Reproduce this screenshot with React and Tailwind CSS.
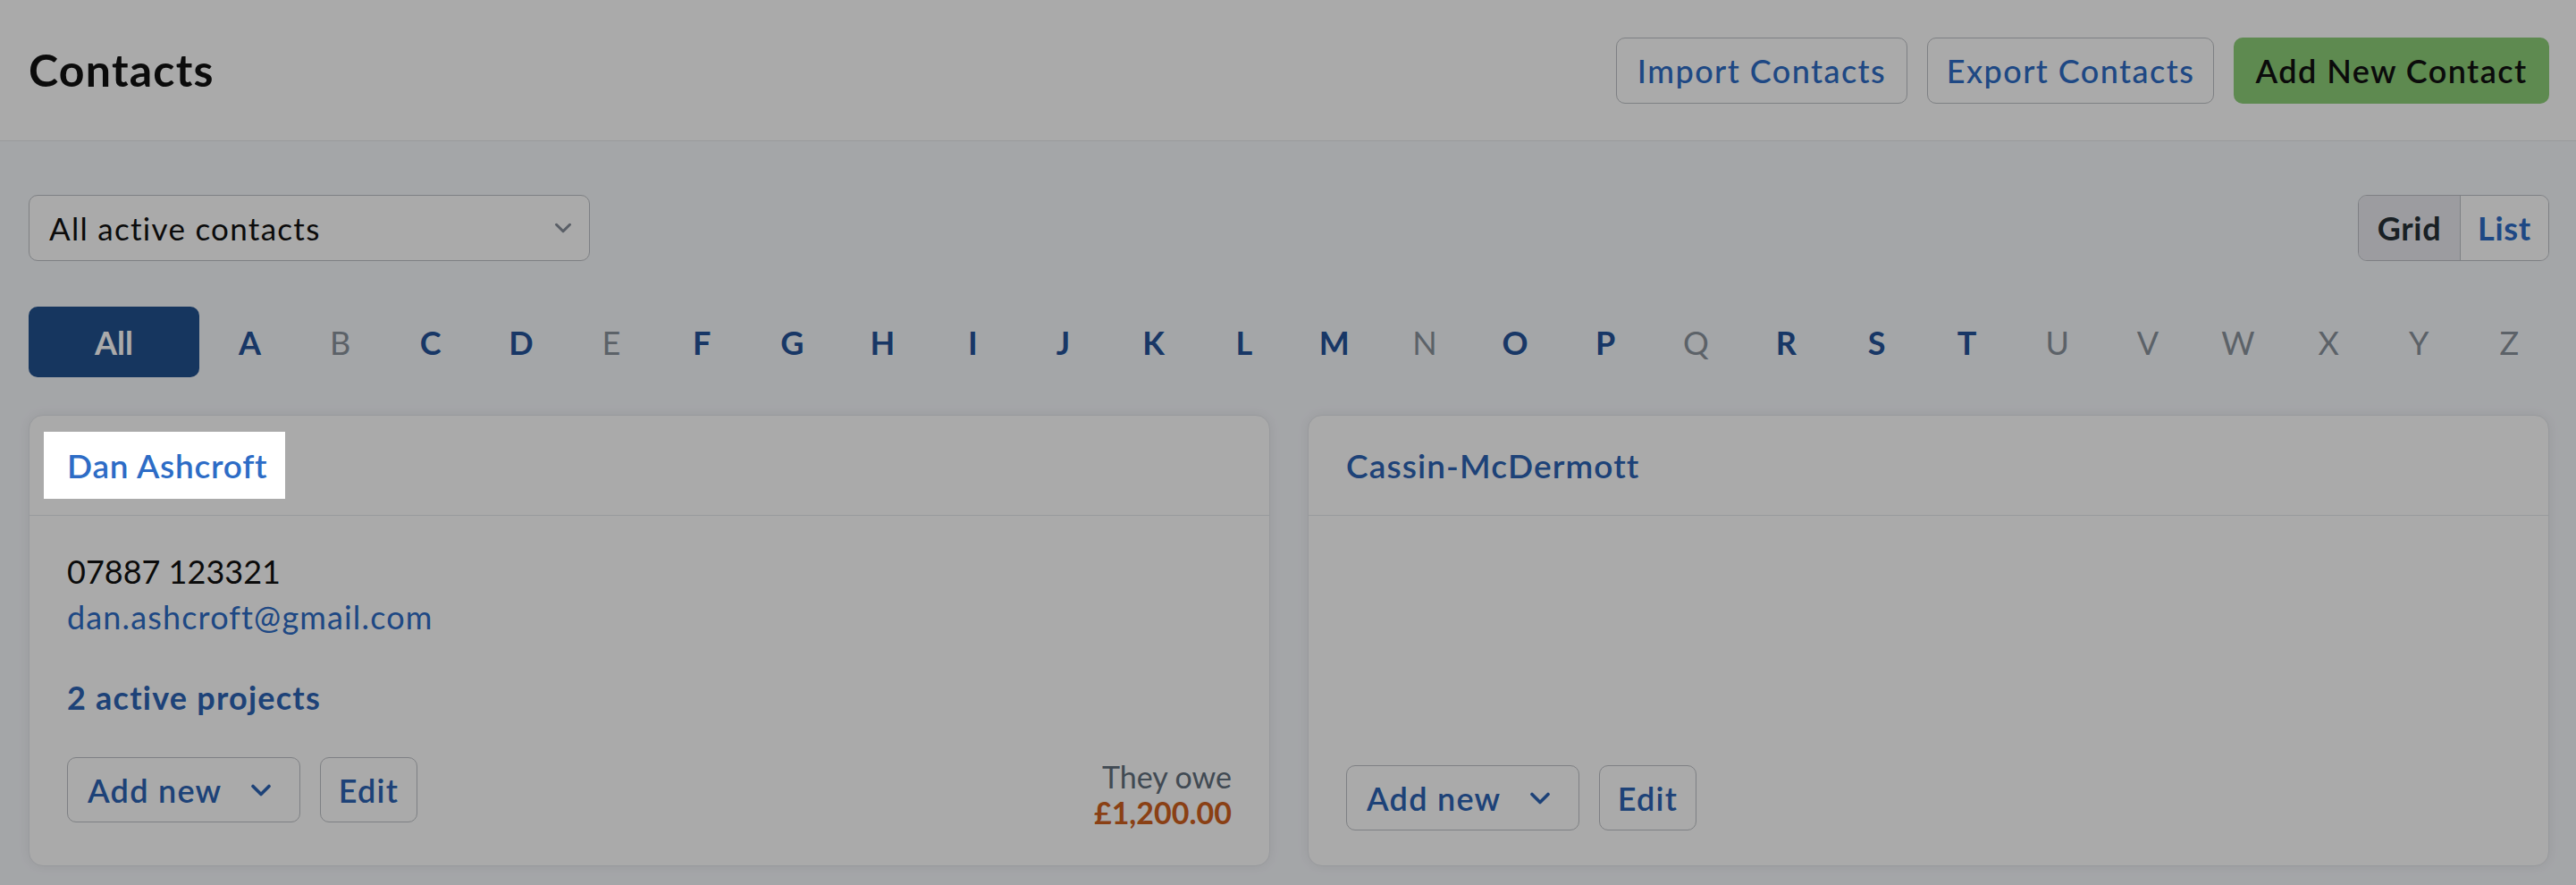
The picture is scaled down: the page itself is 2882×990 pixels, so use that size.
import React, { useState } from "react";

const letters = "ABCDEFGHIJKLMNOPQRSTUVWXYZ".split("");
const emptyLetters = ["B", "E", "N", "Q", "U", "V", "W", "X", "Y", "Z"];

const contacts = [
  {
    id: 1,
    name: "Dan Ashcroft",
    phone: "07887 123321",
    email: "dan.ashcroft@gmail.com",
    projects: 2,
    owes: "£1,200.00",
    highlight: true,
  },
  { id: 2, name: "Cassin-McDermott" },
];

const Chevron = ({ className }) => (
  <svg viewBox="0 0 24 14" className={className} fill="none">
    <path
      d="M3 2.5 L12 11.5 L21 2.5"
      stroke="currentColor"
      strokeWidth="3.6"
      strokeLinecap="round"
      strokeLinejoin="round"
    />
  </svg>
);

const ContactCard = ({ contact }) => {
  return (
    <div className="flex flex-col rounded-[16px] border border-[#e5e7ec] bg-white shadow-[0_0_14px_rgba(0,0,0,0.07)]">
      {/* Name */}
      <div className="flex h-[112px] items-center border-b border-[#e5e7ec] px-[42px]">
        {contact.highlight ? (
          // spotlighted by the tour, sits above the overlay
          <div className="relative z-50 -my-[15px] -ml-[26px] -mr-[20px] bg-white py-[15px] pl-[26px] pr-[20px]">
            <span className="text-[37px] font-semibold leading-[45px] tracking-[0.02em] text-[#2d6cc6]">
              {contact.name}
            </span>
          </div>
        ) : (
          <span className="text-[37px] font-semibold leading-[45px] tracking-[0.03em] text-[#2c63b4]">
            {contact.name}
          </span>
        )}
      </div>

      {/* Details */}
      <div className="flex flex-1 flex-col px-[42px] pb-[39px] pt-[37px]">
        {contact.phone && (
          <p className="text-[36px] leading-[51px] text-[#111]">{contact.phone}</p>
        )}
        {contact.email && (
          <p className="text-[36px] leading-[51px] tracking-[0.032em] text-[#2d6cc6]">
            {contact.email}
          </p>
        )}
        {contact.projects && (
          <p className="mt-[39px] text-[36px] font-bold leading-[51px] tracking-[0.034em] text-[#2c63b4]">
            {contact.projects} active projects
          </p>
        )}

        <div className="mt-auto flex items-start justify-between pt-[41px]">
          <div className="flex gap-[22px]">
            <button className="flex h-[73px] w-[261px] items-center rounded-[10px] border border-[#bec1c6] bg-white pl-[22px] pr-[31px] text-[36px] font-semibold tracking-[0.035em] text-[#2c63b4]">
              Add new
              <Chevron className="ml-auto h-[14px] w-[24px]" />
            </button>
            <button className="flex h-[73px] w-[109px] items-center justify-center rounded-[10px] border border-[#bec1c6] bg-white text-[36px] font-semibold tracking-[0.035em] text-[#2c63b4]">
              Edit
            </button>
          </div>

          {contact.owes && (
            <div className="pt-[2px] text-right text-[34px] leading-[40px]">
              <p className="text-[#626f7d]">They owe</p>
              <p className="font-bold text-[#cf601e]">{contact.owes}</p>
            </div>
          )}
        </div>
      </div>
    </div>
  );
};

const App = () => {
  const [view, setView] = useState("grid");
  const [letter, setLetter] = useState("All");

  return (
    <div className="min-h-screen bg-[#f7f9fd] font-['Lato','Liberation_Sans',sans-serif]">
      {/* Tour overlay */}
      <div className="fixed inset-0 z-40 bg-black/[0.333]" />

      {/* Header */}
      <div className="flex h-[158px] items-center justify-between border-b border-[#e6e7eb] bg-white pl-[32px] pr-[30px]">
        <h1 className="text-[50px] font-bold tracking-[0.025em] text-[#111]">Contacts</h1>
        <div className="flex gap-[22px]">
          <button className="h-[74px] w-[326px] rounded-[10px] border border-[#bec1c6] bg-white text-[36px] font-medium tracking-[0.04em] text-[#2d6cc6]">
            Import Contacts
          </button>
          <button className="h-[74px] w-[321px] rounded-[10px] border border-[#bec1c6] bg-white text-[36px] font-medium tracking-[0.04em] text-[#2d6cc6]">
            Export Contacts
          </button>
          <button className="h-[74px] w-[353px] rounded-[10px] bg-[#8dcf78] text-[36px] font-semibold tracking-[0.04em] text-[#111]">
            Add New Contact
          </button>
        </div>
      </div>

      <div className="pl-[32px] pr-[30px] pt-[60px]">
        {/* Filter + view toggle */}
        <div className="flex items-center justify-between">
          <div className="flex h-[74px] w-[628px] items-center rounded-[10px] border border-[#bec1c6] bg-white pl-[22px] pr-[19px]">
            <span className="text-[35px] tracking-[0.037em] text-[#111]">All active contacts</span>
            <Chevron className="ml-auto h-[12px] w-[20px] text-[#878f9b]" />
          </div>

          <div className="flex h-[74px] overflow-hidden rounded-[10px] border border-[#bec1c6]">
            <button
              onClick={() => setView("grid")}
              className={`w-[113px] text-[36px] font-bold tracking-[0.02em] ${
                view === "grid" ? "bg-[#eaebf0] text-[#263036]" : "bg-white text-[#2d6cc6]"
              }`}
            >
              Grid
            </button>
            <button
              onClick={() => setView("list")}
              className={`w-[99px] border-l border-[#bec1c6] text-[36px] font-bold tracking-[0.02em] ${
                view === "list" ? "bg-[#eaebf0] text-[#263036]" : "bg-white text-[#2d6cc6]"
              }`}
            >
              List
            </button>
          </div>
        </div>

        {/* Alphabet */}
        <div className="mt-[51px] flex h-[79px] items-center">
          <button
            onClick={() => setLetter("All")}
            className="h-[79px] w-[191px] rounded-[10px] bg-[#22518f] text-[36px] font-bold text-white"
          >
            All
          </button>
          <div className="-mr-[6px] ml-[6px] flex flex-1 items-center">
            {letters.map((l) =>
              emptyLetters.includes(l) ? (
                <span key={l} className="flex-1 text-center text-[36px] text-[#8a939d]">
                  {l}
                </span>
              ) : (
                <button
                  key={l}
                  onClick={() => setLetter(l)}
                  className="flex-1 text-center text-[36px] font-bold text-[#24539a]"
                >
                  {l}
                </button>
              )
            )}
          </div>
        </div>

        {/* Cards */}
        <div className="mt-[42px] grid grid-cols-2 gap-[42px]">
          {contacts.map((c) => (
            <ContactCard key={c.id} contact={c} />
          ))}
        </div>
      </div>
    </div>
  );
};

export default App;
